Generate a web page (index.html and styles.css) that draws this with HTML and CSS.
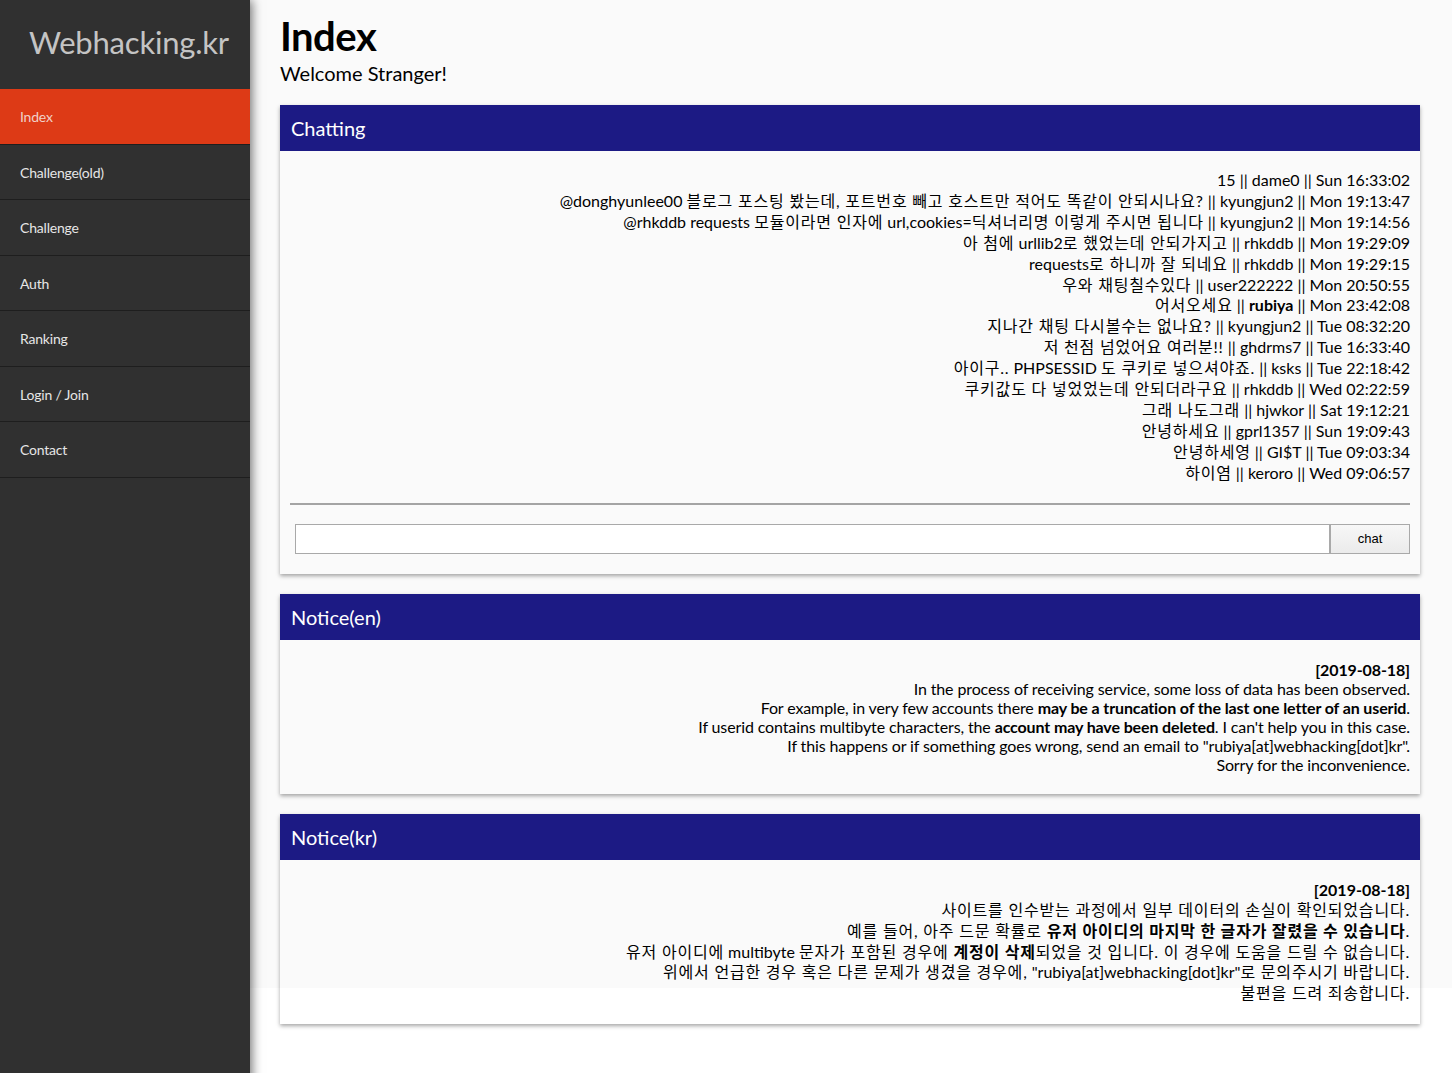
FILE: index.html
```html
<!DOCTYPE html>
<html lang="ko">
<head>
<meta charset="utf-8">
<title>Webhacking.kr</title>
<link rel="stylesheet" href="styles.css">
</head>
<body>
<div class="layout">
  <aside class="sidebar">
    <div class="logo">Webhacking.kr</div>
    <nav class="menu">
      <a class="menu-item active">Index</a>
      <a class="menu-item">Challenge(old)</a>
      <a class="menu-item">Challenge</a>
      <a class="menu-item">Auth</a>
      <a class="menu-item">Ranking</a>
      <a class="menu-item">Login / Join</a>
      <a class="menu-item">Contact</a>
    </nav>
  </aside>
  <main class="main">
    <h1 class="page-title">Index</h1>
    <div class="welcome">Welcome Stranger!</div>

    <section class="card">
      <div class="card-head">Chatting</div>
      <div class="card-body chat-body">
        <div class="chat-log">
          <div>15 || dame0 || Sun 16:33:02</div>
          <div>@donghyunlee00 <span class="ko">블로그 포스팅 봤는데, 포트번호 빼고 호스트만 적어도 똑같이 안되시나요?</span> || kyungjun2 || Mon 19:13:47</div>
          <div>@rhkddb requests <span class="ko">모듈이라면 인자에</span> url,cookies=<span class="ko">딕셔너리명 이렇게 주시면 됩니다</span> || kyungjun2 || Mon 19:14:56</div>
          <div><span class="ko">아 첨에</span> urllib2<span class="ko">로 했었는데 안되가지고</span> || rhkddb || Mon 19:29:09</div>
          <div>requests<span class="ko">로 하니까 잘 되네요</span> || rhkddb || Mon 19:29:15</div>
          <div><span class="ko">우와 채팅칠수있다</span> || user222222 || Mon 20:50:55</div>
          <div><span class="ko">어서오세요</span> || <b>rubiya</b> || Mon 23:42:08</div>
          <div><span class="ko">지나간 채팅 다시볼수는 없나요?</span> || kyungjun2 || Tue 08:32:20</div>
          <div><span class="ko">저 천점 넘었어요 여러분!!</span> || ghdrms7 || Tue 16:33:40</div>
          <div><span class="ko">아이구..</span> PHPSESSID <span class="ko">도 쿠키로 넣으셔야죠.</span> || ksks || Tue 22:18:42</div>
          <div><span class="ko">쿠키값도 다 넣었었는데 안되더라구요</span> || rhkddb || Wed 02:22:59</div>
          <div><span class="ko">그래 나도그래</span> || hjwkor || Sat 19:12:21</div>
          <div><span class="ko">안녕하세요</span> || gprl1357 || Sun 19:09:43</div>
          <div><span class="ko">안녕하세영</span> || GI$T || Tue 09:03:34</div>
          <div><span class="ko">하이염</span> || keroro || Wed 09:06:57</div>
        </div>
        <hr class="divider">
        <form class="chat-form">
          <input class="chat-input" type="text">
          <button class="chat-btn" type="button">chat</button>
        </form>
      </div>
    </section>

    <section class="card">
      <div class="card-head">Notice(en)</div>
      <div class="card-body notice notice-en">
        <b>[2019-08-18]</b><br>
        In the process of receiving service, some loss of data has been observed.<br>
        For example, in very few accounts there <b>may be a truncation of the last one letter of an userid</b>.<br>
        If userid contains multibyte characters, the <b>account may have been deleted</b>. I can't help you in this case.<br>
        If this happens or if something goes wrong, send an email to "rubiya[at]webhacking[dot]kr".<br>
        Sorry for the inconvenience.
      </div>
    </section>

    <section class="card">
      <div class="card-head">Notice(kr)</div>
      <div class="card-body notice notice-kr">
        <b>[2019-08-18]</b><br>
        <span class="ko">사이트를 인수받는 과정에서 일부 데이터의 손실이 확인되었습니다.</span><br>
        <span class="ko">예를 들어, 아주 드문 확률로 <b>유저 아이디의 마지막 한 글자가 잘렸을 수 있습니다</b>.</span><br>
        <span class="ko">유저 아이디에</span> multibyte <span class="ko">문자가 포함된 경우에 <b>계정이 삭제</b>되었을 것 입니다. 이 경우에 도움을 드릴 수 없습니다.</span><br>
        <span class="ko">위에서 언급한 경우 혹은 다른 문제가 생겼을 경우에,</span> "rubiya[at]webhacking[dot]kr"<span class="ko">로 문의주시기 바랍니다.</span><br>
        <span class="ko">불편을 드려 죄송합니다.</span>
      </div>
    </section>
  </main>
</div>
</body>
</html>
```
FILE: styles.css
```css
html, body {
  margin: 0;
  padding: 0;
  background: #fff;
}
body {
  font-family: Lato, "Noto Sans CJK KR", sans-serif;
  color: #000;
}
.layout {
  display: flex;
  min-height: 1073px;
}
.sidebar {
  width: 250px;
  flex: none;
  background: #303030;
  box-shadow: 2px 0 10px rgba(0, 0, 0, 0.55);
  position: relative;
  z-index: 2;
}
.logo {
  height: 89px;
  padding-bottom: 5px;
  display: flex;
  align-items: center;
  justify-content: center;
  color: #c4c4c4;
  font-size: 31px;
  padding-left: 8px;
  box-sizing: border-box;
  letter-spacing: -0.2px;
}
.menu {
  display: flex;
  flex-direction: column;
}
.menu-item {
  display: block;
  height: 54.5px;
  line-height: 56px;
  padding-left: 20px;
  font-size: 14px;
  color: #e6e6e6;
  border-bottom: 1px solid #1e1e1e;
  text-decoration: none;
  letter-spacing: -0.2px;
}
.menu-item.active {
  background: #dd3a16;
  color: #f0d0c8;
}
.main {
  flex: 1;
  padding: 13px 32px 48px 30px;
  background: linear-gradient(to bottom, #fafafa 988px, #fff 988px);
}
.page-title {
  margin: 0;
  font-size: 40px;
  font-weight: 700;
  line-height: 47px;
  letter-spacing: -0.5px;
}
.welcome {
  font-size: 20px;
  line-height: 26px;
  margin-bottom: 19px;
}
.card {
  box-shadow: 0 2px 4px rgba(0, 0, 0, 0.35);
  margin-bottom: 20px;
}
.card-head {
  background: #1c1a84;
  color: #fff;
  font-size: 20px;
  height: 46px;
  line-height: 46px;
  padding-left: 11px;
}
.card-body {
  padding: 20px 10px 20px 10px;
  text-align: right;
}
.chat-body {
  padding-top: 19px;
}
.chat-log {
  font-size: 16px;
  line-height: 20.9px;
}
.ko {
  letter-spacing: 0.8px;
}
.divider {
  border: 0;
  border-top: 2px solid #a4a4a4;
  margin: 19px 0 19px 0;
}
.chat-form {
  display: flex;
  margin: 0 0 0 5px;
}
.chat-input {
  flex: 1;
  height: 30px;
  box-sizing: border-box;
  border: 1px solid #a9a9a9;
  background: #fff;
  margin: 0;
}
.chat-btn {
  width: 80px;
  height: 30px;
  box-sizing: border-box;
  border: 1px solid #a9a9a9;
  background: linear-gradient(#f7f7f7, #ebebeb);
  font-family: "Liberation Sans", Arial, sans-serif;
  font-size: 13px;
  color: #000;
  margin: 0;
}
.notice {
  font-size: 16px;
  line-height: 19px;
}
.notice-en {
  letter-spacing: -0.12px;
}
.notice-kr {
  line-height: 20.7px;
}
```
